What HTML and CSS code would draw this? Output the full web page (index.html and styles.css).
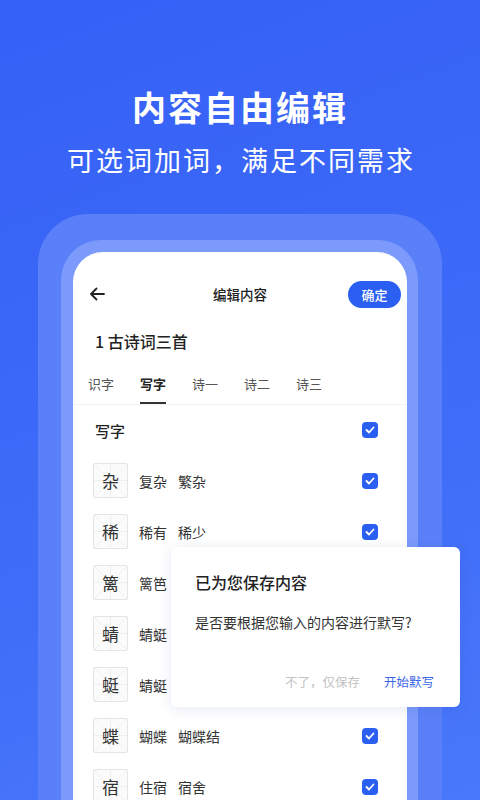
FILE: index.html
```html
<!DOCTYPE html>
<html lang="zh-CN">
<head>
    <meta charset="UTF-8">
    <meta name="viewport" content="width=device-width, initial-scale=1.0">
    <title>内容自由编辑</title>
    <link rel="stylesheet" href="styles.css">
</head>
<body>

    <!-- Hero text -->
    <header class="hero">
        <h1>内容自由编辑</h1>
        <p>可选词加词，满足不同需求</p>
    </header>

    <!-- Phone frame -->
    <div class="frame">
        <div class="frame-inner">
            <div class="screen">

                <div class="nav">
                    <svg class="back" width="18" height="18" viewBox="0 0 18 18">
                        <path d="M16 9H3M8.5 3.5L3 9l5.5 5.5" fill="none" stroke="#222" stroke-width="1.8" stroke-linecap="round" stroke-linejoin="round"/>
                    </svg>
                    <span class="nav-title">编辑内容</span>
                    <button class="confirm">确定</button>
                </div>

                <div class="lesson">1 古诗词三首</div>

                <div class="tabs">
                    <span class="tab">识字</span>
                    <span class="tab active">写字</span>
                    <span class="tab">诗一</span>
                    <span class="tab">诗二</span>
                    <span class="tab">诗三</span>
                </div>

                <div class="list">
                    <div class="row head">
                        <span class="head-title">写字</span>
                        <span class="check"><svg width="10" height="8" viewBox="0 0 10 8"><path d="M1.5 4l2.5 2.5 4.5-5" fill="none" stroke="#fff" stroke-width="1.8" stroke-linecap="round" stroke-linejoin="round"/></svg></span>
                    </div>
                    <div class="row">
                        <span class="grid-char">杂</span>
                        <span class="words"><span>复杂</span><span>繁杂</span></span>
                        <span class="check"><svg width="10" height="8" viewBox="0 0 10 8"><path d="M1.5 4l2.5 2.5 4.5-5" fill="none" stroke="#fff" stroke-width="1.8" stroke-linecap="round" stroke-linejoin="round"/></svg></span>
                    </div>
                    <div class="row">
                        <span class="grid-char">稀</span>
                        <span class="words"><span>稀有</span><span>稀少</span></span>
                        <span class="check"><svg width="10" height="8" viewBox="0 0 10 8"><path d="M1.5 4l2.5 2.5 4.5-5" fill="none" stroke="#fff" stroke-width="1.8" stroke-linecap="round" stroke-linejoin="round"/></svg></span>
                    </div>
                    <div class="row">
                        <span class="grid-char">篱</span>
                        <span class="words"><span>篱笆</span></span>
                        <span class="check"><svg width="10" height="8" viewBox="0 0 10 8"><path d="M1.5 4l2.5 2.5 4.5-5" fill="none" stroke="#fff" stroke-width="1.8" stroke-linecap="round" stroke-linejoin="round"/></svg></span>
                    </div>
                    <div class="row">
                        <span class="grid-char">蜻</span>
                        <span class="words"><span>蜻蜓</span></span>
                        <span class="check"><svg width="10" height="8" viewBox="0 0 10 8"><path d="M1.5 4l2.5 2.5 4.5-5" fill="none" stroke="#fff" stroke-width="1.8" stroke-linecap="round" stroke-linejoin="round"/></svg></span>
                    </div>
                    <div class="row">
                        <span class="grid-char">蜓</span>
                        <span class="words"><span>蜻蜓</span></span>
                        <span class="check"><svg width="10" height="8" viewBox="0 0 10 8"><path d="M1.5 4l2.5 2.5 4.5-5" fill="none" stroke="#fff" stroke-width="1.8" stroke-linecap="round" stroke-linejoin="round"/></svg></span>
                    </div>
                    <div class="row">
                        <span class="grid-char">蝶</span>
                        <span class="words"><span>蝴蝶</span><span>蝴蝶结</span></span>
                        <span class="check"><svg width="10" height="8" viewBox="0 0 10 8"><path d="M1.5 4l2.5 2.5 4.5-5" fill="none" stroke="#fff" stroke-width="1.8" stroke-linecap="round" stroke-linejoin="round"/></svg></span>
                    </div>
                    <div class="row">
                        <span class="grid-char">宿</span>
                        <span class="words"><span>住宿</span><span>宿舍</span></span>
                        <span class="check"><svg width="10" height="8" viewBox="0 0 10 8"><path d="M1.5 4l2.5 2.5 4.5-5" fill="none" stroke="#fff" stroke-width="1.8" stroke-linecap="round" stroke-linejoin="round"/></svg></span>
                    </div>
                </div>

            </div>
        </div>
    </div>

    <!-- Dialog over the list -->
    <div class="dialog">
        <div class="dialog-title">已为您保存内容</div>
        <div class="dialog-text">是否要根据您输入的内容进行默写?</div>
        <div class="dialog-actions">
            <span class="btn-skip">不了，仅保存</span>
            <span class="btn-start">开始默写</span>
        </div>
    </div>

</body>
</html>
```

FILE: styles.css
```css
/* Page */
body {
    margin: 0;
    width: 480px;
    height: 800px;
    overflow: hidden;
    position: relative;
    font-family: "Noto Sans CJK SC", "Noto Sans", sans-serif;
    background: linear-gradient(160deg, #3560f6 0%, #3f6cf8 60%, #4a78fa 100%);
    color: #222;
}

/* Hero */
.hero {
    text-align: center;
    color: #fff;
    padding-top: 84px;
}

.hero h1 {
    margin: 0;
    font-size: 34px;
    font-weight: 700;
    line-height: 46px;
    letter-spacing: 2px;
}

.hero p {
    margin: 12px 0 0;
    padding-left: 2px;
    font-size: 27px;
    font-weight: 400;
    line-height: 36px;
    letter-spacing: 2px;
}

/* Phone frame */
.frame {
    box-sizing: border-box;
    margin: 36px 38px 0;
    padding: 26px 24px 0 23px;
    height: 587px;
    border-radius: 50px 50px 0 0;
    background: #5a80f9;
}

.frame-inner {
    box-sizing: border-box;
    padding: 12px 11px 0 12px;
    height: 100%;
    border-radius: 40px 40px 0 0;
    background: #7b9afb;
}

.screen {
    box-sizing: border-box;
    height: 100%;
    overflow: hidden;
    background: #fff;
    border-radius: 30px 30px 0 0;
    padding-top: 20px;
}

/* Nav bar */
.nav {
    height: 44px;
    display: flex;
    align-items: center;
    justify-content: space-between;
    padding: 0 6px 0 15px;
}

.back {
    display: block;
    margin-right: 26px;
}

.nav-title {
    font-size: 13.5px;
    font-weight: 500;
    color: #222;
}

.confirm {
    width: 53px;
    height: 27px;
    border: none;
    border-radius: 14px;
    background: #2b5ff2;
    color: #fff;
    font-family: inherit;
    font-size: 13px;
    font-weight: 500;
    padding: 0;
}

/* Lesson title */
.lesson {
    padding: 14px 0 0 22px;
    height: 22px;
    line-height: 22px;
    font-size: 16px;
    font-weight: 500;
    color: #222;
}

/* Tabs */
.tabs {
    display: flex;
    gap: 26px;
    padding: 23px 0 0 15px;
    height: 29px;
    border-bottom: 1px solid #f1f2f4;
}

.tab {
    font-size: 13px;
    line-height: 18px;
    color: #555;
    height: 29px;
    position: relative;
}

.tab.active {
    color: #222;
    font-weight: 700;
}

.tab.active::after {
    content: "";
    position: absolute;
    left: 0;
    right: 0;
    bottom: 0;
    height: 2px;
    background: #333;
}

/* List */
.row {
    height: 51px;
    display: flex;
    align-items: center;
    padding: 0 29px 0 20px;
}

.row.head {
    height: 50px;
}

.head-title {
    flex: 1;
    padding-left: 2px;
    font-size: 15px;
    font-weight: 500;
    color: #222;
}

.grid-char {
    width: 33px;
    height: 33px;
    border: 1px solid #e5e5e5;
    border-radius: 2px;
    display: flex;
    align-items: center;
    justify-content: center;
    font-size: 17px;
    color: #333;
    background:
        linear-gradient(to right, transparent 49%, #efefef 49%, #efefef 51%, transparent 51%),
        linear-gradient(to bottom, transparent 49%, #efefef 49%, #efefef 51%, transparent 51%),
        linear-gradient(45deg, transparent 49.3%, #f0f0f0 49.3%, #f0f0f0 50.7%, transparent 50.7%),
        linear-gradient(-45deg, transparent 49.3%, #f0f0f0 49.3%, #f0f0f0 50.7%, transparent 50.7%),
        #fbfbfb;
}

.words {
    flex: 1;
    display: flex;
    gap: 11px;
    margin-left: 11px;
    font-size: 14px;
    color: #333;
}

.check {
    width: 16px;
    height: 16px;
    border-radius: 4px;
    background: #2b5ff2;
    display: flex;
    align-items: center;
    justify-content: center;
}

/* Dialog */
.dialog {
    position: absolute;
    left: 171px;
    top: 547px;
    width: 289px;
    height: 160px;
    box-sizing: border-box;
    padding: 24px 26px 0 24px;
    background: #fff;
    border-radius: 6px;
    box-shadow: 0 2px 14px rgba(40, 70, 160, 0.12);
}

.dialog-title {
    font-size: 16px;
    font-weight: 500;
    line-height: 22px;
    color: #222;
}

.dialog-text {
    margin-top: 19px;
    font-size: 14px;
    line-height: 20px;
    color: #333;
}

.dialog-actions {
    margin-top: 41px;
    display: flex;
    justify-content: flex-end;
    gap: 24px;
    font-size: 12.5px;
    line-height: 18px;
}

.btn-skip {
    color: #c2c2c2;
}

.btn-start {
    color: #3a66e8;
}
```
